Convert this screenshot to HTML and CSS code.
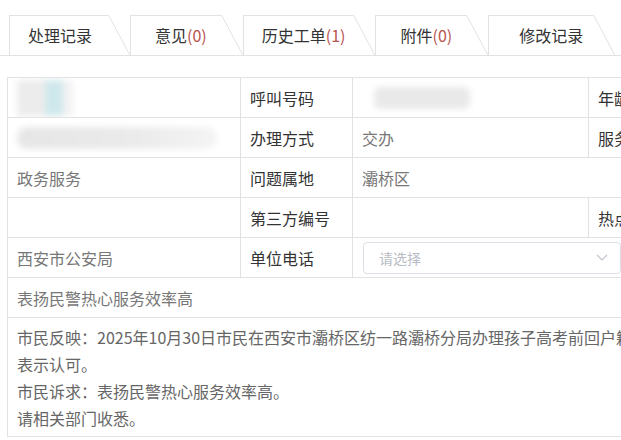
FILE: index.html
```html
<!DOCTYPE html>
<html lang="zh-CN">
<head>
    <meta charset="UTF-8">
    <meta name="viewport" content="width=device-width, initial-scale=1.0">
    <title>工单详情</title>
    <link rel="stylesheet" href="styles.css">
</head>
<body>
    <div class="page">
        <div class="tabs">
            <div class="tab">处理记录</div>
            <div class="tab">意见<span class="count">(0)</span></div>
            <div class="tab">历史工单<span class="count">(1)</span></div>
            <div class="tab">附件<span class="count">(0)</span></div>
            <div class="tab">修改记录</div>
        </div>

        <div class="grid">
            <!-- 第一行 -->
            <div class="cell value">
                <span class="blur blur-avatar"></span>
            </div>
            <div class="cell label">呼叫号码</div>
            <div class="cell value">
                <span class="blur blur-phone"></span>
            </div>
            <div class="cell label">年龄</div>

            <!-- 第二行 -->
            <div class="cell value">
                <span class="blur blur-name"></span>
            </div>
            <div class="cell label">办理方式</div>
            <div class="cell value">交办</div>
            <div class="cell label">服务</div>

            <!-- 第三行 -->
            <div class="cell value">政务服务</div>
            <div class="cell label">问题属地</div>
            <div class="cell value wide">灞桥区</div>

            <!-- 第四行 -->
            <div class="cell value"></div>
            <div class="cell label">第三方编号</div>
            <div class="cell value"></div>
            <div class="cell label">热点</div>

            <!-- 第五行 -->
            <div class="cell value">西安市公安局</div>
            <div class="cell label">单位电话</div>
            <div class="cell value wide">
                <div class="select">
                    <span class="placeholder">请选择</span>
                    <svg class="arrow" width="12" height="7" viewBox="0 0 12 7">
                        <polyline points="1,1 6,6 11,1" fill="none" stroke="#c0c4cc" stroke-width="1.2"/>
                    </svg>
                </div>
            </div>

            <!-- 标题 -->
            <div class="cell value full">表扬民警热心服务效率高</div>

            <!-- 内容 -->
            <div class="cell content full">
                <div class="line">市民反映：2025年10月30日市民在西安市灞桥区纺一路灞桥分局办理孩子高考前回户籍</div>
                <div class="line">表示认可。</div>
                <div class="line">市民诉求：表扬民警热心服务效率高。</div>
                <div class="line">请相关部门收悉。</div>
            </div>
        </div>
    </div>
</body>
</html>
```

FILE: styles.css
```css
* {
    margin: 0;
    padding: 0;
    box-sizing: border-box;
}

body {
    background-color: #fff;
    color: #333;
    font-family: "Noto Sans CJK SC", "Noto Sans", sans-serif;
    overflow: hidden;
}

.page {
    width: 760px;
    padding-top: 15px;
}

/* 标签页 */
.tabs {
    display: flex;
    padding-left: 9px;
    border-bottom: 1px solid #e2e2e2;
    height: 41px;
}

.tab {
    position: relative;
    height: 40px;
    line-height: 38px;
    padding: 0 10px 0 22px;
    margin-right: 22px;
    font-size: 16px;
    color: #333;
    border-top: 1px solid #e2e2e2;
    border-left: 1px solid #e2e2e2;
    white-space: nowrap;
}

.tab::after {
    content: '';
    position: absolute;
    top: -1px;
    bottom: 0;
    left: 100%;
    width: 0;
    border-right: 1px solid #e2e2e2;
    transform-origin: top left;
    transform: skewX(28deg);
}

.tab:nth-child(1) { padding-left: 18px; padding-right: 16px; }
.tab:nth-child(2) { padding-left: 24px; padding-right: 14px; }
.tab:nth-child(3) { padding-left: 18px; padding-right: 8px; }
.tab:nth-child(4) { padding-left: 24px; padding-right: 14px; }
.tab:nth-child(5) { padding-left: 30px; }

.count {
    color: #b9554f;
}

/* 表格 */
.grid {
    display: grid;
    grid-template-columns: 233px 112px 236px 1fr;
    margin-top: 21px;
    margin-left: 7px;
    border-top: 1px solid #e2e2e2;
    border-left: 1px solid #e2e2e2;
}

.cell {
    display: flex;
    align-items: center;
    height: 40px;
    padding: 0 9px;
    font-size: 16px;
    border-right: 1px solid #e2e2e2;
    border-bottom: 1px solid #e2e2e2;
    white-space: nowrap;
    overflow: hidden;
}

.label {
    color: #333;
}

.value {
    color: #777;
}

.wide {
    grid-column: span 2;
}

.full {
    grid-column: 1 / -1;
}

.content {
    display: block;
    height: 119px;
    padding: 6px 9px;
    color: #666;
    font-size: 16px;
}

.line {
    line-height: 27px;
}

/* 打码部分 */
.blur {
    display: block;
    filter: blur(3px);
}

.blur-avatar {
    width: 56px;
    height: 36px;
    background: linear-gradient(90deg, #ececec 0, #ececec 28px, #cfe8ec 28px, #cfe8ec 46px, #f2f2f2 46px);
}

.blur-name {
    width: 200px;
    height: 22px;
    background: linear-gradient(90deg, #e6e6e6, #ebebeb 60%, #f4f4f4);
    border-radius: 10px;
}

.blur-phone {
    width: 96px;
    height: 22px;
    margin-left: 12px;
    background: #e9e9e9;
    border-radius: 6px;
}

/* 下拉框 */
.select {
    flex: 1;
    display: flex;
    align-items: center;
    justify-content: space-between;
    height: 32px;
    margin-left: 1px;
    margin-right: 129px;
    padding: 0 12px 0 15px;
    border: 1px solid #dcdfe6;
    border-radius: 4px;
}

.placeholder {
    font-size: 14px;
    color: #b8bcc4;
}
```
